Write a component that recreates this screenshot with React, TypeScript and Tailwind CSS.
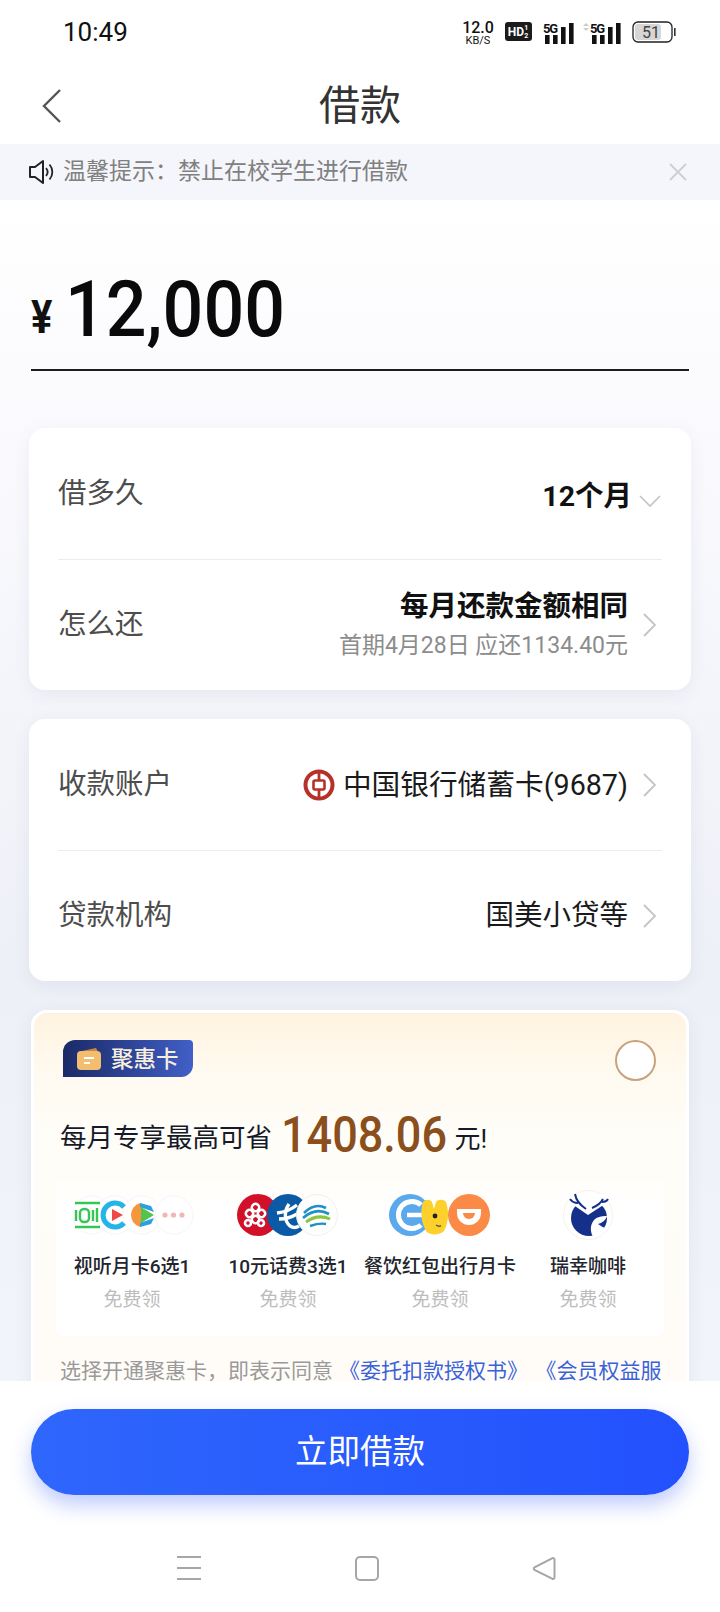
import React from "react";

const ChevronRight = () => (
  <svg width="15" height="26" viewBox="0 0 15 26" fill="none" className="shrink-0">
    <polyline points="2,2 13,13 2,24" stroke="#c4c4c4" strokeWidth="1.8" />
  </svg>
);

const ChevronDown = () => (
  <svg width="22" height="14" viewBox="0 0 22 14" fill="none" className="shrink-0">
    <polyline points="1,2 11,12 21,2" stroke="#c4c4c4" strokeWidth="1.6" />
  </svg>
);

const Signal = ({ dots }: { dots?: boolean }) => (
  <svg width={dots ? 40 : 32} height="24" viewBox={dots ? "-8 0 40 24" : "0 0 32 24"} className="overflow-visible">
    {dots && (
      <>
        <polygon points="-4,2 -7,5 -1,5" fill="#ccc" />
        <polygon points="-4,10 -7,7 -1,7" fill="#ccc" />
      </>
    )}
    <text x="0" y="12" fontSize="13" fontWeight="700" fill="#111" fontFamily="Roboto" textLength="15">
      5G
    </text>
    <rect x="2" y="14" width="4.600" height="9" fill="#111" />
    <rect x="10" y="14" width="4.600" height="9" fill="#111" />
    <rect x="18" y="6" width="4.600" height="17" fill="#111" />
    <rect x="26" y="2" width="4.600" height="21" fill="#111" />
  </svg>
);

const StatusBar = () => (
  <div className="h-[70px] flex justify-between pl-[63px] pr-[44px] pt-[19px] shrink-0">
    <div className="text-[26px] leading-[26px] text-[#111]">10:49</div>
    <div className="flex items-start gap-[7px] pt-[2px]">
      <div className="flex flex-col items-center text-[#111] w-[30px] mr-[5px]">
        <span className="text-[16px] leading-[14px] font-medium">12.0</span>
        <span className="text-[11px] leading-[11px]">KB/S</span>
      </div>
      <div className="w-[27px] h-[19px] mt-[1px] mr-[4px] bg-[#1b1b1b] rounded-[3px] flex items-center justify-center text-white text-[12px] leading-none font-bold">
        HD
        <span className="text-[7px] leading-[8px] w-[5px]">1 2</span>
      </div>
      <Signal />
      <Signal dots />
      <svg width="44" height="22" viewBox="0 0 44 22" className="ml-[3px]">
        <rect x="1" y="1" width="39" height="20" rx="5" fill="#fff" stroke="#222" strokeWidth="1.3" />
        <rect x="3" y="3" width="26" height="16" rx="3" fill="#d6d6d6" />
        <rect x="42" y="7" width="1.6" height="8" fill="#333" />
        <text x="19" y="17" fontSize="16" textAnchor="middle" fill="#444" fontFamily="Roboto">
          51
        </text>
      </svg>
    </div>
  </div>
);

const Header = () => (
  <div className="h-[74px] shrink-0 relative flex items-center justify-center">
    <svg width="22" height="36" viewBox="0 0 22 36" fill="none" className="absolute left-[41px] top-[18px]">
      <polyline points="19,2 3,18 19,34" stroke="#555" strokeWidth="2.4" />
    </svg>
    <div className="text-[41px] leading-[48px] text-[#333] mt-[-2px]">借款</div>
  </div>
);

const Notice = () => (
  <div className="h-[56px] shrink-0 bg-[#f5f6fb] flex items-center pl-[28px] pr-[32px]">
    <svg width="27" height="26" viewBox="0 0 27 26" fill="none" className="shrink-0">
      <path d="M2 8h5l8-6v22l-8-6H2z" stroke="#222" strokeWidth="2" strokeLinejoin="round" />
      <path d="M18 9c2 2.400 2 5.600 0 8M21.500 5.500c3.800 4.400 3.800 10.600 0 15" stroke="#222" strokeWidth="1.8" />
    </svg>
    <div className="ml-[8px] text-[23px] leading-[30px] text-[#808080] whitespace-nowrap">
      温馨提示：禁止在校学生进行借款
    </div>
    <svg width="20" height="20" viewBox="0 0 20 20" fill="none" className="ml-auto">
      <path d="M2 2l16 16M18 2L2 18" stroke="#cfcfcf" strokeWidth="1.8" />
    </svg>
  </div>
);

const Amount = () => (
  <div className="h-[171px] mx-[31px] border-b-2 border-[#1d1d1d] flex items-end shrink-0">
    <span className="text-[47px] leading-[47px] font-bold text-[#111] mb-[29px] w-[34px] origin-left scale-x-[0.85]">¥</span>
    <span className="text-[78px] leading-[78px] font-medium text-[#0a0a0a] mb-[20px] origin-left scale-x-[0.92]">
      12,000
    </span>
  </div>
);

const Row = ({ label, children, top = 0 }: { label: string; children: React.ReactNode; top?: number }) => (
  <div className={`h-[131px] flex items-center justify-between ${top ? "border-t border-[#ececec]" : ""}`}>
    <div className="text-[28.500px] leading-[36px] text-[#4d4d4d]">{label}</div>
    {children}
  </div>
);

const LoanCard = () => (
  <div className="mx-[29px] mt-[57px] bg-white rounded-[16px] px-[29px] shadow-[0_4px_18px_rgba(40,50,100,0.07)]">
    <Row label="借多久">
      <div className="flex items-center mt-[6px]">
        <span className="text-[28.500px] leading-[36px] font-bold text-[#111]">12个月</span>
        <span className="ml-[7px] mr-[1px] mt-[8px] flex">
          <ChevronDown />
        </span>
      </div>
    </Row>
    <Row label="怎么还" top={1}>
      <div className="flex items-center">
        <div className="flex flex-col items-end">
          <span className="text-[28.500px] leading-[36px] font-bold text-[#111]">每月还款金额相同</span>
          <span className="text-[23px] leading-[30px] mt-[6px] text-[#8c8c8c]">首期4月28日 应还1134.40元</span>
        </div>
        <span className="ml-[14px] mr-[5px] flex">
          <ChevronRight />
        </span>
      </div>
    </Row>
  </div>
);

const BocLogo = () => (
  <svg width="32" height="32" viewBox="0 0 32 32" fill="none" className="shrink-0">
    <circle cx="16" cy="16" r="13.500" stroke="#b5322a" strokeWidth="4" />
    <rect x="10.500" y="11.500" width="11" height="9" rx="1.500" stroke="#b5322a" strokeWidth="2.600" />
    <path d="M16 3v8M16 21v8" stroke="#b5322a" strokeWidth="2.800" />
  </svg>
);

const AccountCard = () => (
  <div className="mx-[29px] mt-[29px] bg-white rounded-[16px] px-[29px] shadow-[0_4px_18px_rgba(40,50,100,0.07)]">
    <Row label="收款账户">
      <div className="flex items-center">
        <BocLogo />
        <span className="ml-[8px] text-[28.700px] leading-[36px] text-[#1a1a1a]">中国银行储蓄卡(9687)</span>
        <span className="ml-[14px] mr-[5px] flex">
          <ChevronRight />
        </span>
      </div>
    </Row>
    <Row label="贷款机构" top={1}>
      <div className="flex items-center">
        <span className="text-[28.500px] leading-[36px] text-[#1a1a1a]">国美小贷等</span>
        <span className="ml-[14px] mr-[5px] flex">
          <ChevronRight />
        </span>
      </div>
    </Row>
  </div>
);

const VideoIcons = () => (
  <svg width="128" height="48" viewBox="0 0 128 48" fill="none">
    <circle cx="24" cy="24" r="19" fill="#fff" stroke="#f8f5f2" />
    <circle cx="47" cy="24" r="19" fill="#fff" stroke="#f8f5f2" />
    <circle cx="74" cy="24" r="19" fill="#fff" stroke="#f8f5f2" />
    <circle cx="106" cy="24" r="19" fill="#fff" stroke="#f8f5f2" />
    <path d="M7 12h25M7 36h25" stroke="#36c653" strokeWidth="2.400" />
    <path d="M8 19v11M25 19v11M29 17v14" stroke="#36c653" strokeWidth="2.400" />
    <rect x="12" y="18" width="9" height="13" rx="4" stroke="#36c653" strokeWidth="2.400" />
    <path d="M56 16a12 12 0 1 0 0 16" stroke="#25b4e6" strokeWidth="5" />
    <path d="M44 18l11 6-11 6z" fill="#ef4a4a" />
    <path d="M72 12a12.500 12.500 0 0 0 0 24l3-4V16z" fill="#f5963c" />
    <path d="M72 12l11 3 3 6-14-5zM72 36l11-3 3-6-14 5z" fill="#2a9fe2" />
    <path d="M73 16l13 8-13 8z" fill="#55c24e" />
    <circle cx="97" cy="24" r="2.600" fill="#f2b6b6" />
    <circle cx="105.500" cy="24" r="2.600" fill="#f2b6b6" />
    <circle cx="114" cy="24" r="2.600" fill="#f2b6b6" />
  </svg>
);

const TelecomIcons = () => (
  <svg width="104" height="48" viewBox="0 0 104 48" fill="none">
    <circle cx="22" cy="24" r="21" fill="#d2102a" />
    <g stroke="#fff" strokeWidth="2.600" fill="none">
      <rect x="16" y="13" width="7" height="7" rx="3" transform="rotate(45 19.500 16.500)" />
      <rect x="22" y="19" width="7" height="7" rx="3" transform="rotate(45 25.500 22.500)" />
      <rect x="10" y="19" width="7" height="7" rx="3" transform="rotate(45 13.500 22.500)" />
      <rect x="16" y="25" width="7" height="7" rx="3" transform="rotate(45 19.500 28.500)" />
      <rect x="22" y="29" width="6" height="6" rx="3" transform="rotate(45 25 32)" />
      <rect x="9" y="29" width="6" height="6" rx="3" transform="rotate(45 12 32)" />
    </g>
    <circle cx="52" cy="24" r="21" fill="#0b5aa6" />
    <path d="M41 22c8-1 15-4 20-8M43 28c7 0 13-2 18-5" stroke="#fff" strokeWidth="3.400" />
    <path d="M53 13c-5 7-5 17 1 22 3 2 6 2 9 0" stroke="#fff" strokeWidth="3.400" />
    <circle cx="81" cy="24" r="20.500" fill="#fff" stroke="#f7efe6" />
    <path d="M68 22c6-6 14-9 22-5M67 27c8-7 17-9 26-4" stroke="#1f8fc6" strokeWidth="2.600" />
    <path d="M70 31c7-5 15-7 24-3" stroke="#8cc63f" strokeWidth="3" />
    <path d="M74 35c6-2 11-3 16-2" stroke="#1f8fc6" strokeWidth="2.400" />
  </svg>
);

const FoodIcons = () => (
  <svg width="104" height="46" viewBox="0 0 104 46" fill="none">
    <circle cx="22" cy="23" r="21" fill="#5aa9ec" />
    <path d="M33 13a13.500 13.500 0 1 0 0 20" stroke="#fff" strokeWidth="5" />
    <path d="M19 23h18" stroke="#fff" strokeWidth="4.500" />
    <path d="M35 10c3-3 7-3 9 0l2 7 2-7c2-3 8-3 10 0 3 9 3 20-2 29-4 4-14 5-18 0-5-9-6-20-3-29z" fill="#fdd02b" />
    <circle cx="47" cy="24" r="2.400" fill="#222" />
    <path d="M48 33c2 1.500 4 1.500 5 .5" stroke="#555" strokeWidth="1.400" />
    <circle cx="81" cy="23" r="21" fill="#fa8a46" />
    <path d="M69 17h24v4a12 12 0 0 1-24 0z" fill="#fff" />
    <path d="M75 21h12a6 6 0 0 1-12 0z" fill="#fa8a46" />
  </svg>
);

const CoffeeIcon = () => (
  <svg width="50" height="50" viewBox="0 0 50 50" fill="none">
    <circle cx="25" cy="25" r="24.500" fill="#fff" stroke="#f8f0e8" />
    <circle cx="26" cy="28" r="18" fill="#14308a" />
    <path d="M6 12l19 13 20-13V4H6z" fill="#fff" />
    <path d="M30 47c-3-6-3-12 1-17 3-3 7-4 13-4-1 4-5 7-9 8 3 2 6 4 10 5l-6 6z" fill="#fff" />
    <path d="M12 4c1 6 5 11 11 15M7 9c2 3 5 4 8 4M40 9c-2 4-6 7-11 9M45 9c-1 2-3 3-6 3" stroke="#14308a" strokeWidth="2" />
  </svg>
);

const benefits = [
  { icon: <VideoIcons />, title: "视听月卡6选1" },
  { icon: <TelecomIcons />, title: "10元话费3选1" },
  { icon: <FoodIcons />, title: "餐饮红包出行月卡" },
  { icon: <CoffeeIcon />, title: "瑞幸咖啡" },
];

const BenefitCard = () => (
  <div className="mx-[31px] mt-[29px] rounded-[16px] border-[3px] border-white bg-[linear-gradient(180deg,#fff3e0_0%,#fffaf0_14%,#fffdf8_28%,#fffcf8_100%)] pt-[27px] shadow-[0_4px_18px_rgba(40,50,100,0.07)]">
    <div className="flex justify-between items-start pl-[29px] pr-[30px]">
      <div className="h-[37px] w-[130px] flex items-center pl-[13px] rounded-tl-[12px] rounded-br-[12px] rounded-tr-[4px] bg-linear-to-r from-[#1b2a68] to-[#415fc8]">
        <svg width="26" height="24" viewBox="0 0 26 24" fill="none" className="shrink-0">
          <path d="M6 4l14-3 2 4H6z" fill="#c98a3f" />
          <rect x="1" y="4" width="24" height="19" rx="4" fill="#f3bd6f" />
          <path d="M8 11h10M8 16h6" stroke="#fff" strokeWidth="2" />
        </svg>
        <span className="ml-[9px] text-[22.500px] leading-[28px] font-medium text-[#f7eedd]">聚惠卡</span>
      </div>
      <div className="w-[41px] h-[41px] rounded-full bg-white border-2 border-[#c9a27c]"></div>
    </div>
    <div className="flex items-end pl-[26px] mt-[31px] h-[48px] text-[#16192a]">
      <span className="text-[26.500px] leading-[36px] mb-[4px]">每月专享最高可省</span>
      <span className="ml-[9px] mr-[-11px] text-[50px] leading-[50px] font-medium text-[#8a4f1c] origin-left scale-x-[0.9]">
        1408.06
      </span>
      <span className="text-[26px] leading-[36px] mb-[3px]">元!</span>
    </div>
    <div className="mx-[22px] mt-[18px] h-[158px] rounded-[8px] bg-linear-to-b from-white/20 to-white to-[20%] grid grid-cols-[152px_160px_144px_152px]">
      {benefits.map((b) => (
        <div key={b.title} className="flex flex-col items-center">
          <div className="h-[50px] flex items-center mt-[12px]">{b.icon}</div>
          <div className="mt-[14px] text-[19px] leading-[26px] font-medium whitespace-nowrap text-[#23252e]">{b.title}</div>
          <div className="mt-[7px] text-[19px] leading-[26px] whitespace-nowrap text-[#bdbdbd]">免费领</div>
        </div>
      ))}
    </div>
    <div className="ml-[26px] mr-[20px] mt-[18px] text-[21px] leading-[34px] text-[#9a9a9a] pb-[20px]">
      选择开通聚惠卡，即表示同意
      <span className="text-[#3a62d8] ml-[6px]">《委托扣款授权书》</span>
      <span className="text-[#3a62d8] ml-[18px]">《会员权益服务协议》</span>
    </div>
  </div>
);

const Footer = () => (
  <div className="h-[231px] shrink-0 bg-white px-[31px] pt-[28px] flex flex-col">
    <div className="h-[86px] rounded-full bg-linear-to-r from-[#2f66fc] to-[#2351fd] shadow-[0_10px_20px_rgba(45,85,250,0.3)] flex items-center justify-center text-white text-[32.500px] leading-[40px]">
      立即借款
    </div>
    <div className="mt-[61px] flex justify-between pl-[146px] pr-[133px] items-start">
      <svg width="24" height="24" viewBox="0 0 24 24" fill="none">
        <path d="M0 1h24M0 12h24M0 23h24" stroke="#a6a6a6" strokeWidth="2" />
      </svg>
      <svg width="24" height="25" viewBox="0 0 24 25" fill="none">
        <rect x="1" y="1" width="22" height="23" rx="4" stroke="#a6a6a6" strokeWidth="2" />
      </svg>
      <svg width="24" height="25" viewBox="0 0 24 25" fill="none">
        <path d="M22.500 3.500v18a1.500 1.500 0 0 1-2.400 1.200L2.500 13.800a1.500 1.500 0 0 1 0-2.500L20 2.300a1.500 1.500 0 0 1 2.500 1.200z" stroke="#a6a6a6" strokeWidth="2" />
      </svg>
    </div>
  </div>
);

export default function App() {
  return (
    <div className="w-[720px] h-[1612px] flex flex-col overflow-hidden bg-white font-['Roboto','Noto_Sans_CJK_SC',sans-serif]">
      <StatusBar />
      <Header />
      <Notice />
      <div className="flex-1 min-h-0 overflow-hidden bg-[linear-gradient(180deg,#ffffff_0%,#fafafe_20%,#eef0f7_65%,#f2f4fb_100%)]">
        <Amount />
        <LoanCard />
        <AccountCard />
        <BenefitCard />
      </div>
      <Footer />
    </div>
  );
}
